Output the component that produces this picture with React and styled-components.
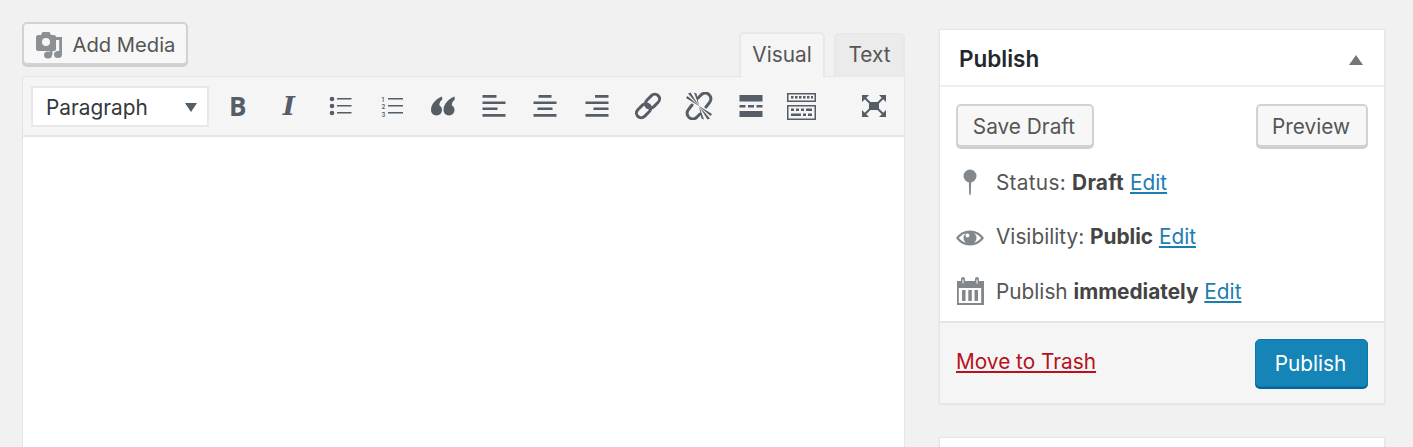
import React from "react";
import styled, { createGlobalStyle } from "styled-components";

const GlobalStyle = createGlobalStyle`
  html, body {
    margin: 0;
    padding: 0;
    height: 447px;
    overflow: hidden;
    background: #f1f1f1;
  }
  body {
    font-family: "Inter", "Liberation Sans", sans-serif;
    font-size: 20.8px;
    color: #555;
  }
`;

const Icon = ({ children, size = 24, view = "0 0 24 24" }) => (
  <svg width={size} height={size} viewBox={view} fill="#555d66" aria-hidden="true">
    {children}
  </svg>
);

const quoteMark =
  "M11 2.500C5 5 0 10 0 16a5.500 5.500 0 1 0 8.300-4.700C8.300 9 9.300 7 11.300 5.500z";

const toolbarIcons = [
  {
    name: "bullets",
    draw: (
      <>
        <circle cx="4" cy="5" r="2.300" />
        <circle cx="4" cy="12" r="2.300" />
        <circle cx="4" cy="19" r="2.300" />
        <path d="M9 4h14.500v1.600H9zM9 11h14.500v1.600H9zM9 18h14.500v1.600H9z" />
      </>
    ),
  },
  {
    name: "numbers",
    draw: (
      <>
        <text x="1.500" y="7.500" fontSize="6" fontWeight="600" fontFamily="Inter">1</text>
        <text x="1.500" y="15" fontSize="6" fontWeight="600" fontFamily="Inter">2</text>
        <text x="1.500" y="22.500" fontSize="6" fontWeight="600" fontFamily="Inter">3</text>
        <path d="M8 4h15v1.600H8zM8 11h15v1.600H8zM8 18h15v1.600H8z" />
      </>
    ),
  },
  {
    name: "quote",
    draw: (
      <>
        <path d={quoteMark} />
        <path d={quoteMark} transform="translate(12.500 0)" />
      </>
    ),
  },
  {
    name: "left",
    draw: <path d="M.5 1h14v2.800H.5zM.5 7.500h23v2.400H.5zM.5 13.500h15v2.400H.5zM.5 20h23v2.800H.5z" />,
  },
  {
    name: "center",
    draw: <path d="M5.500 1h13v2.800h-13zM.5 7.500h23v2.400H.5zM4.500 13.500h15v2.400h-15zM.5 20h23v2.800H.5z" />,
  },
  {
    name: "right",
    draw: <path d="M10 1h13.500v2.800H10zM.5 7.500h23v2.400H.5zM8.500 13.500h15v2.400h-15zM.5 20h23v2.800H.5z" />,
  },
  {
    name: "link",
    size: 28,
    draw: (
      <g fill="none" stroke="#555d66" strokeWidth="3">
        <rect x="1.500" y="14" width="16" height="9.500" rx="4.750" transform="rotate(-45 9.500 18.750)" />
        <rect x="10.500" y="4.500" width="16" height="9.500" rx="4.750" transform="rotate(-45 18.500 9.250)" />
      </g>
    ),
  },
  {
    name: "unlink",
    size: 28,
    draw: (
      <>
        <g fill="none" stroke="#555d66" strokeWidth="3" strokeLinecap="round">
          <path d="M13 6l3-3a5.500 5.500 0 0 1 8.500 7.500L21 15" />
          <path d="M15 22l-3 3a5.500 5.500 0 0 1-8.500-7.500L7 13" />
        </g>
        <path d="M14 14L1 6l1.500-2zM14 14L3 1.500l2.500-1zM14 14L9 .5l2.500 1zM14 14l13 8-1.500 2zM14 14l11 12.500-2.500 1zM14 14l5 13.500-2.500-1z" />
      </>
    ),
  },
  {
    name: "more",
    draw: <path d="M.5 1h23v6.500H.5zM.5 11h6v2.500h-6zM9 11h6v2.500H9zM17.500 11h6v2.500h-6zM.5 17h23v6H.5z" />,
  },
  {
    name: "kitchen",
    size: 29,
    view: "0 0 29 27",
    draw: (
      <>
        <path
          fillRule="evenodd"
          d="M0 0h29v9H0zM1.500 1.500v6h26v-6zM0 12h29v15H0zM1.500 13.500v12h26v-12z"
        />
        <path d="M4 3h2.500v2.500H4zM8 3h2.500v2.500H8zM12 3h2.500v2.500H12zM16 3h2.500v2.500H16zM20 3h2.500v2.500H20zM24 3h2v2.500h-2zM4 15.500h3V18H4zM9 15.500h3V18H9zM14 15.500h3V18h-3zM19 15.500h6V18h-6zM4 20.500h10V23H4zM16 20.500h3V23h-3zM21 20.500h4V23h-4z" />
      </>
    ),
  },
];

const Page = styled.div`
  display: flex;
  align-items: flex-start;
  gap: 34px;
  box-sizing: border-box;
  height: 447px;
  overflow: hidden;
  padding: 22px 0 0 22px;
`;

const EditorColumn = styled.div`
  width: 883px;
`;

const EditorTools = styled.div`
  display: flex;
  justify-content: space-between;
  align-items: flex-start;
  height: 54px;
`;

const Button = styled.button`
  display: inline-flex;
  align-items: center;
  justify-content: center;
  box-sizing: border-box;
  height: ${(p) => p.$height || 43}px;
  width: ${(p) => p.$width}px;
  padding: 2px 2px 0 0;
  font: inherit;
  color: #555;
  background: #f7f7f7;
  border: 2px solid #d2d2d2;
  border-radius: 5px;
  box-shadow: 0 2px 0 #cfcfcf;
`;

const AddMedia = styled(Button)`
  gap: 10px;
  margin: 0;
  padding-right: 0;
  font-size: 20.2px;
`;

const Tabs = styled.div`
  display: flex;
  gap: 9px;
  align-items: flex-end;
  padding-top: 10px;
`;

const Tab = styled.div`
  display: flex;
  align-items: center;
  justify-content: center;
  box-sizing: border-box;
  width: ${(p) => p.$width}px;
  height: ${(p) => (p.$active ? 46 : 44)}px;
  margin-bottom: ${(p) => (p.$active ? -2 : -1)}px;
  padding-bottom: ${(p) => (p.$active ? 3 : 2)}px;
  position: relative;
  background: ${(p) => (p.$active ? "#f5f5f5" : "#ebebeb")};
  border: 2px solid #e8e8e8;
  border-bottom: ${(p) => (p.$active ? "none" : "2px solid #e8e8e8")};
  border-radius: 5px 5px 0 0;
`;

const Editor = styled.div`
  box-sizing: border-box;
  height: 371px;
  background: #fff;
  border: 1px solid #e5e5e5;
  border-bottom: 0;
`;

const Toolbar = styled.div`
  display: flex;
  align-items: center;
  box-sizing: border-box;
  height: 60px;
  padding-left: 8px;
  background: #f5f5f5;
  border-bottom: 2px solid #e5e5e5;
`;

const Select = styled.div`
  display: flex;
  align-items: center;
  justify-content: space-between;
  box-sizing: border-box;
  width: 178px;
  height: 41px;
  padding: 2px 10px 0 13px;
  color: #32373c;
  background: #fff;
  border: 2px solid #e8e8e8;
`;

const Caret = styled.span`
  width: 0;
  height: 0;
  border-left: 6px solid transparent;
  border-right: 6px solid transparent;
  border-top: 9px solid #555d66;
`;

const ToolButton = styled.div`
  display: flex;
  align-items: center;
  justify-content: center;
  flex: 0 0 51.3px;
  height: 40px;
  color: #555d66;
`;

const ToolButtons = styled.div`
  display: flex;
  margin-left: 3px;
`;

const BoldGlyph = styled.span`
  font-family: "Open Sans", sans-serif;
  font-weight: 700;
  font-size: 26px;
  line-height: 1;
`;

const ItalicGlyph = styled.span`
  font-family: "DejaVu Serif", serif;
  font-style: italic;
  font-weight: 700;
  font-size: 26px;
  line-height: 1;
`;

const Fullscreen = styled(ToolButton)`
  margin-left: auto;
  margin-right: 4px;
`;

const Box = styled.div`
  box-sizing: border-box;
  width: 446px;
  background: #fff;
  border: 1px solid #e5e5e5;
  box-shadow: 0 1px 2px rgba(0, 0, 0, 0.06);
`;

const Sidebar = styled.div`
  display: flex;
  flex-direction: column;
  gap: 33px;
  margin-top: 7px;
`;

const BoxHeader = styled.div`
  display: flex;
  align-items: center;
  justify-content: space-between;
  box-sizing: border-box;
  height: 57px;
  padding: 1px 21px 0 19px;
  border-bottom: 2px solid #eee;
`;

const BoxTitle = styled.h2`
  margin: 0;
  font-size: 22.5px;
  font-weight: 600;
  color: #23282d;
`;

const CollapseArrow = styled.span`
  width: 0;
  height: 0;
  margin-top: 3px;
  border-left: 7px solid transparent;
  border-right: 7px solid transparent;
  border-bottom: 10px solid #72777c;
`;

const Actions = styled.div`
  display: flex;
  justify-content: space-between;
  padding: 17px 16px 0 16px;
`;

const MetaList = styled.div`
  display: flex;
  flex-direction: column;
  padding: 8px 16px 2px;
`;

const MetaRow = styled.div`
  display: flex;
  align-items: center;
  height: 54.5px;
  gap: 12px;
  white-space: pre;
`;

const MetaIcon = styled.span`
  display: flex;
  justify-content: center;
  width: 28px;
`;

const MetaText = styled.span`
  letter-spacing: ${(p) => p.$spacing || 0}px;
`;

const EditLink = styled.a`
  color: #1c7db1;
  letter-spacing: 0;
  text-decoration: underline;
`;

const Strong = styled.b`
  font-weight: 700;
  color: #444;
`;

const BoxFooter = styled.div`
  display: flex;
  align-items: center;
  justify-content: space-between;
  box-sizing: border-box;
  height: 82px;
  padding: 0 16px;
  background: #f5f5f5;
  border-top: 2px solid #e5e5e5;
`;

const TrashLink = styled.a`
  margin-top: -2px;
  color: #b5121b;
  text-decoration: underline;
`;

const PublishButton = styled(Button)`
  color: #fff;
  background: #1585b8;
  border: 1px solid #0f76a8;
  box-shadow: 0 2px 0 #006799;
`;

const StubBox = styled(Box)`
  height: 10px;
  border-bottom: 0;
`;

const gray = "#82878c";

export default function App() {
  return (
    <>
      <GlobalStyle />
      <Page>
        <EditorColumn>
          <EditorTools>
            <AddMedia $width={166}>
              <Icon size={28} view="0 0 28 28">
                <g fill="#8b9095">
                  <path
                    fillRule="evenodd"
                    d="M3 4h3l1.500-3h7L16 4h3c1 0 2 1 2 2v12c0 1-1 2-2 2H3c-1 0-2-1-2-2V6c0-1 1-2 2-2zM11 7a4 4 0 1 0 0 8 4 4 0 0 0 0-8z"
                  />
                  <path d="M21 6h6v17h-2.800V9H21z" />
                  <ellipse cx="23" cy="23.500" rx="4" ry="3.500" />
                  <path d="M15 18h2.500v6H15z" />
                  <ellipse cx="13" cy="24" rx="4" ry="3.500" />
                </g>
              </Icon>
              Add Media
            </AddMedia>
            <Tabs>
              <Tab $active $width={86}>Visual</Tab>
              <Tab $width={71}>Text</Tab>
            </Tabs>
          </EditorTools>
          <Editor>
            <Toolbar>
              <Select>
                Paragraph
                <Caret />
              </Select>
              <ToolButtons>
                <ToolButton>
                  <BoldGlyph>B</BoldGlyph>
                </ToolButton>
                <ToolButton>
                  <ItalicGlyph>I</ItalicGlyph>
                </ToolButton>
                {toolbarIcons.map((icon) => (
                  <ToolButton key={icon.name}>
                    <Icon size={icon.size} view={icon.view || (icon.size === 28 ? "0 0 28 28" : undefined)}>
                      {icon.draw}
                    </Icon>
                  </ToolButton>
                ))}
              </ToolButtons>
              <Fullscreen>
                <Icon size={26} view="0 0 26 26">
                  <path d="M8 9h10v8H8z" />
                  <path d="M1 2h7L1 9zM25 2h-7l7 7zM1 24h7l-7-7zM25 24h-7l7-7z" />
                  <path d="M4 5l5 5M22 5l-5 5M4 21l5-5M22 21l-5-5" stroke="#555d66" strokeWidth="2" />
                </Icon>
              </Fullscreen>
            </Toolbar>
          </Editor>
        </EditorColumn>
        <Sidebar>
          <Box>
            <BoxHeader>
              <BoxTitle>Publish</BoxTitle>
              <CollapseArrow />
            </BoxHeader>
            <Actions>
              <Button $width={138}>Save Draft</Button>
              <Button $width={112}>Preview</Button>
            </Actions>
            <MetaList>
              <MetaRow>
                <MetaIcon>
                  <Icon size={28} view="0 0 28 28">
                    <g fill={gray}>
                      <circle cx="14" cy="8" r="6.500" />
                      <path d="M12.800 12h2.400l-.4 14-.8 1.500-.8-1.500z" />
                    </g>
                  </Icon>
                </MetaIcon>
                <MetaText $spacing={0.28}>
                  Status: <Strong>Draft</Strong> <EditLink>Edit</EditLink>
                </MetaText>
              </MetaRow>
              <MetaRow>
                <MetaIcon>
                  <Icon size={28} view="0 0 28 28">
                    <g fill={gray}>
                      <path
                        fillRule="evenodd"
                        d="M0 15C3 10.500 8 7.500 14 7.500S25 10.500 28 15c-3 4.500-8 7.500-14 7.500S3 19.500 0 15zM2.800 15c2.800 3.300 6.800 5.500 11.200 5.500s8.400-2.200 11.200-5.500C22.400 11.700 18.400 9.500 14 9.500S5.600 11.700 2.800 15z"
                      />
                      <path
                        fillRule="evenodd"
                        d="M14 8.500a6.500 6.500 0 1 0 0 13 6.500 6.500 0 0 0 0-13zM11.500 10.500a2 2 0 1 0 0 4 2 2 0 0 0 0-4z"
                      />
                    </g>
                  </Icon>
                </MetaIcon>
                <MetaText>
                  Visibility: <Strong>Public</Strong> <EditLink>Edit</EditLink>
                </MetaText>
              </MetaRow>
              <MetaRow>
                <MetaIcon>
                  <Icon size={28} view="0 0 28 28">
                    <path
                      fill={gray}
                      fillRule="evenodd"
                      d="M1 4h4V2a2 2 0 0 1 4 0v2h10V2a2 2 0 0 1 4 0v2h6v24H1zM2.800 11v15h22.400V11zM6.500 2.500v4h1v-4zM20.500 2.500v4h1v-4zM6 13h3.500v11H6zM12.300 13h3.500v11h-3.500zM18.500 13H22v11h-3.500z"
                    />
                  </Icon>
                </MetaIcon>
                <MetaText>
                  Publish <Strong>immediately</Strong> <EditLink>Edit</EditLink>
                </MetaText>
              </MetaRow>
            </MetaList>
            <BoxFooter>
              <TrashLink>Move to Trash</TrashLink>
              <PublishButton $width={113} $height={48}>Publish</PublishButton>
            </BoxFooter>
          </Box>
          <StubBox />
        </Sidebar>
      </Page>
    </>
  );
}
